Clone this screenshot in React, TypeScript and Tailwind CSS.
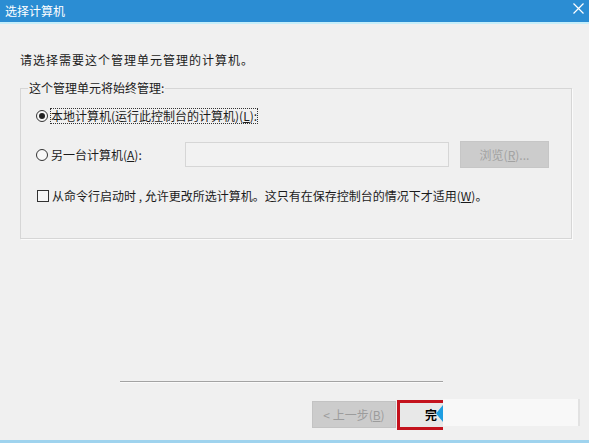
import React from "react";

const font = { fontFamily: '"Noto Sans CJK SC", "Noto Sans", sans-serif' };

function Radio({ checked }: { checked?: boolean }) {
  return (
    <span className="flex h-[12px] w-[12px] shrink-0 items-center justify-center rounded-full border border-[#333] bg-[#f7f7f7]">
      {checked && <span className="h-[6px] w-[6px] rounded-full bg-[#222]" />}
    </span>
  );
}

export default function App() {
  return (
    <div
      className="flex h-[443px] w-[589px] flex-col overflow-hidden bg-[#f0f0f0] text-[12px] text-[#1b1b1b]"
      style={font}
    >
      {/* title bar */}
      <div className="flex h-[22px] shrink-0 items-center justify-between bg-[#2b8dd3] pl-[5px] pr-[5px]">
        <span className="text-[12px] leading-[16px] text-white">选择计算机</span>
        <svg width="11" height="11" viewBox="0 0 11 11" className="mt-[-5px]">
          <path d="M0.5 0.5 L10.5 10.5 M10.5 0.5 L0.5 10.5" stroke="#fff" strokeWidth="1.2" />
        </svg>
      </div>
      <div className="h-[2px] shrink-0 bg-[#c6eefa]" />

      {/* body */}
      <div className="flex flex-col pl-[20px]">
        <p className="mt-[28px] leading-[16px] tracking-[1px]">请选择需要这个管理单元管理的计算机。</p>

        <div className="mt-[20px] h-[151px] w-[552px] border border-[#d6d6d6] shadow-[1px_1px_0_#fbfbfb]">
          <div className="-mt-[9px] ml-[7px] w-fit bg-[#f0f0f0] px-[1px] leading-[16px]">这个管理单元将始终管理:</div>

          <div className="ml-[15px] mt-[12px] flex items-center gap-[2px]">
            <Radio checked />
            <span className="border border-dotted border-[#333] leading-[14px]">
              本地计算机(运行此控制台的计算机)(<span className="underline">L</span>):
            </span>
          </div>

          <div className="ml-[15px] mt-[17px] flex h-[27px] items-center">
            <Radio />
            <span className="ml-[3px] w-[134px] leading-[16px]">
              另一台计算机(<span className="underline">A</span>):
            </span>
            <div className="h-[25px] w-[264px] border border-[#d6d6d6] bg-[#f2f2f2]" />
            <div className="ml-[11px] flex h-[27px] w-[89px] items-center justify-center border border-[#c6c6c6] bg-[#cccccc] text-[#a2a2a2]">
              浏览(<span className="underline">R</span>)...
            </div>
          </div>

          <div className="ml-[16px] mt-[20px] flex items-center gap-[3px]">
            <span className="h-[12px] w-[12px] shrink-0 border border-[#333] bg-[#f7f7f7]" />
            <span className="leading-[16px]">
              从命令行启动时 , 允许更改所选计算机。这只有在保存控制台的情况下才适用(<span className="underline">W</span>)。
            </span>
          </div>
        </div>

        {/* separator */}
        <div className="ml-[100px] mt-[142px] h-[1px] w-[323px] bg-[#a3a3a3] shadow-[0_1px_0_#fafafa]" />

        {/* buttons */}
        <div className="ml-[292px] mt-[17px] flex items-start">
          <div className="mt-[2px] flex h-[27px] w-[84px] items-center justify-center border border-[#c3c3c3] bg-[#cccccc] text-[#9c9c9c]">
            &lt; 上一步(<span className="underline">B</span>)
          </div>
          <div className="relative ml-[1px] mt-[1px] flex h-[30px] w-[46px] items-center border-y-[3px] border-l-[3px] border-[#c4121d] bg-[#e8e8e8] pl-[25px]">
            <span className="font-bold text-black">完</span>
            <svg width="7" height="17" viewBox="0 0 7 17" className="absolute right-0 top-[2px]">
              <path d="M7 0 L0 8.5 L7 17 Z" fill="#1e9ee2" />
            </svg>
          </div>
          <div className="h-[27px] w-[137px] border-r-[2px] border-[#e2e2e2] bg-[#f8f8f8]" />
        </div>
      </div>

      <div className="mt-auto h-[3px] shrink-0 bg-[#9fd3ee]" />
    </div>
  );
}
